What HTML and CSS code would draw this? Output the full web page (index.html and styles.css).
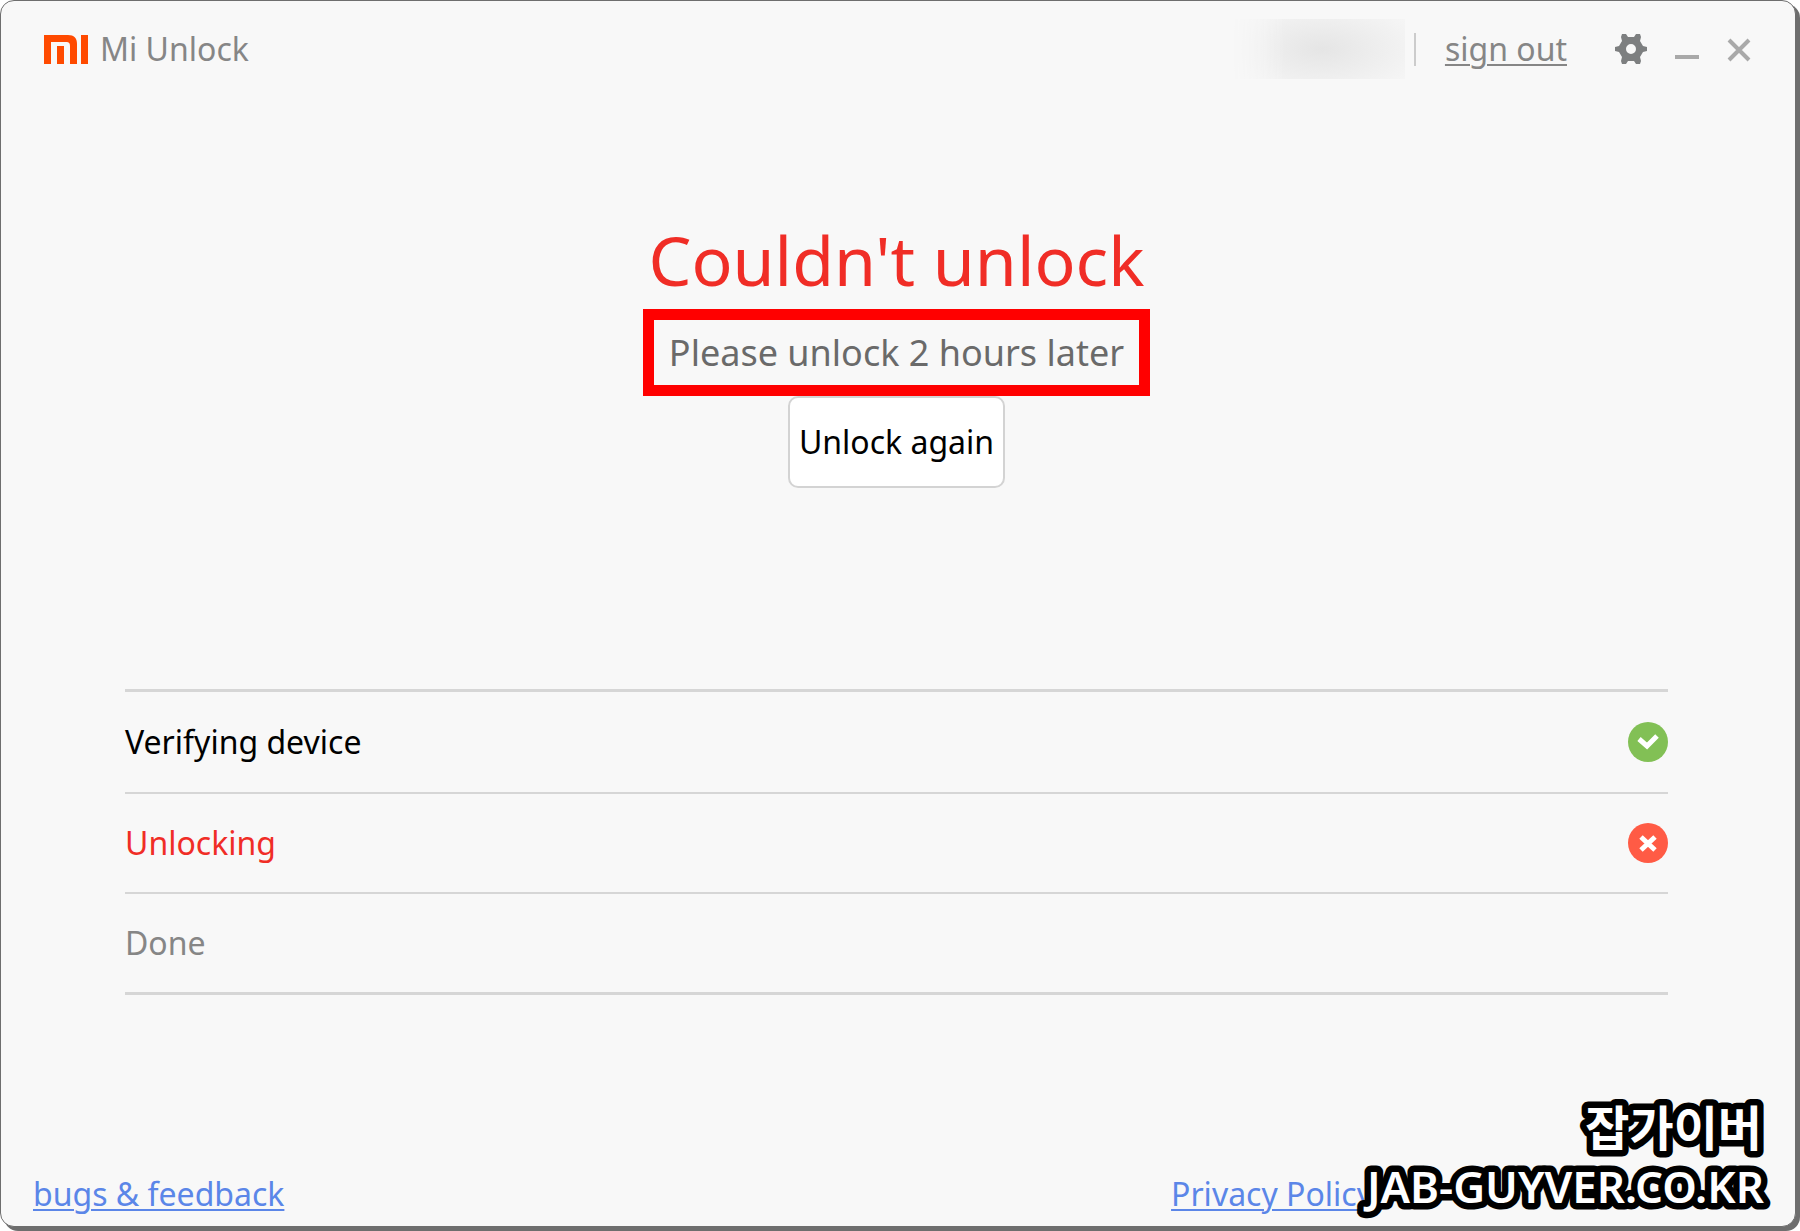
FILE: index.html
```html
<!DOCTYPE html>
<html lang="en">
<head>
  <meta charset="UTF-8">
  <meta name="viewport" content="width=device-width, initial-scale=1">
  <title>Mi Unlock</title>
  <link rel="stylesheet" href="styles.css">
</head>
<body>
  <div class="window">
    <header class="titlebar">
      <div class="brand">
        <svg class="logo" viewBox="0 0 44 29" aria-hidden="true">
          <path d="M0 0h24c6 0 9 3 9 9v20h-7V11c0-3-1-4-4-4H7v22H0z"/>
          <path d="M13 11h7v18h-7zM37 0h7v29h-7z"/>
        </svg>
        <span>Mi Unlock</span>
      </div>
      <div class="account">
        <div class="user"></div>
        <a href="#" class="signout">sign out</a>
      </div>
      <div class="controls">
        <button type="button" aria-label="Settings">
          <svg class="gear" viewBox="0 0 32 30">
            <path fill-rule="evenodd" d="M7 0h4l2 3h6l2-3h4l1 3-1 4 3 5 4 1v4l-4 1-3 5 1 4-1 3h-4l-2-3h-6l-2 3H7l-1-3 1-4-3-5-4-1v-4l4-1 3-5-1-4zM16 10a5 5 0 1 0 0 10a5 5 0 1 0 0-10z"/>
          </svg>
        </button>
        <button type="button" aria-label="Minimize">
          <svg viewBox="0 0 24 30"><path d="M0 23h24"/></svg>
        </button>
        <button type="button" aria-label="Close">
          <svg viewBox="0 0 24 30"><path d="M2 6l20 20M22 6L2 26"/></svg>
        </button>
      </div>
    </header>

    <main>
      <section class="result">
        <h1>Couldn't unlock</h1>
        <p class="notice">Please unlock 2 hours later</p>
        <button type="button" class="again">Unlock again</button>
      </section>

      <ul class="steps">
        <li class="ok">
          <span>Verifying device</span>
          <svg viewBox="0 0 40 40" aria-hidden="true">
            <circle cx="20" cy="20" r="20"/>
            <path d="M11 17l8 7 10-10"/>
          </svg>
        </li>
        <li class="failed">
          <span>Unlocking</span>
          <svg viewBox="0 0 40 40" aria-hidden="true">
            <circle cx="20" cy="20" r="20"/>
            <path d="M13 14l14 13M27 14L13 27"/>
          </svg>
        </li>
        <li class="pending"><span>Done</span></li>
      </ul>
    </main>

    <footer>
      <a href="#">bugs &amp; feedback</a>
      <a href="#">Privacy Policy</a>
    </footer>
  </div>

  <svg class="watermark" viewBox="0 0 400 120" lang="ko">
    <text class="ko" x="398" y="51">잡가이버</text>
    <text x="400" y="108">JAB-GUYVER.CO.KR</text>
  </svg>
</body>
</html>
```

FILE: styles.css
```css
* {
  box-sizing: border-box;
}

body {
  margin: 0;
  min-height: 100vh;
  padding: 0 4px 4px 0;
  display: flex;
  background: #fff;
  font-family: "Noto Sans", "Open Sans", sans-serif;
  font-size: 32px;
  line-height: 44px;
  color: #000;
}

.window {
  flex: 1;
  display: flex;
  flex-direction: column;
  background: #f8f8f8;
  border: 1px solid #6e6e6e;
  border-radius: 14px;
  box-shadow: 4px 4px 0 #6e6e6e;
}

/* title bar */
.titlebar {
  display: flex;
  align-items: center;
  padding: 18px 44px 0 43px;
  color: #868686;
}

.brand {
  display: flex;
  align-items: center;
  gap: 12px;
  margin-right: auto;
}

.logo {
  width: 44px;
  height: 29px;
  fill: #ff4a00;
}

.account {
  display: flex;
  align-items: center;
}

.user {
  width: 173px;
  height: 60px;
  margin-right: 9px;
  background: radial-gradient(110px 52px at 52% 50%, #e5e5e5, #ededed 45%, #f3f3f3 80%, transparent);
  background-color: #f6f6f6;
  -webkit-mask-image: linear-gradient(to right, transparent, #000 30%);
  mask-image: linear-gradient(to right, transparent, #000 30%);
}

.signout {
  color: inherit;
  position: relative;
  padding-left: 31px;
  text-underline-offset: 3px;
  text-decoration-thickness: 2px;
}

.signout::before {
  content: "";
  position: absolute;
  left: 0;
  top: 6px;
  width: 2px;
  height: 33px;
  background: #ccc;
}

.controls {
  display: flex;
  gap: 28px;
  margin-left: 48px;
}

.controls button {
  display: flex;
  padding: 0;
  border: 0;
  background: none;
  cursor: pointer;
}

.controls svg {
  width: 24px;
  height: 30px;
  fill: none;
  stroke: #a9a9a9;
  stroke-width: 4;
}

.controls .gear {
  width: 32px;
  fill: #7d7f80;
  stroke: none;
}

main {
  flex: 1;
  padding: 0 127px 0 124px;
}

.result {
  display: flex;
  flex-direction: column;
  align-items: center;
  padding-top: 136px;
}

h1 {
  margin: 0 0 4px;
  font-size: 68px;
  line-height: 90px;
  font-weight: 400;
  color: #f02d26;
}

.notice {
  margin: 0;
  padding: 10px 15px;
  border: 11px solid #f00;
  font-size: 36px;
  line-height: 45px;
  color: #6a6a6a;
}

.again {
  height: 92px;
  padding: 0 9px;
  border: 2px solid #d3d3d3;
  border-radius: 10px;
  background: #fff;
  color: #000;
  font: inherit;
  cursor: pointer;
}

/* progress list */
.steps {
  list-style: none;
  margin: 201px 0 0;
  padding: 0;
  border-top: 3px solid #d6d6d6;
  border-bottom: 3px solid #d6d6d6;
}

.steps li {
  display: flex;
  align-items: center;
  justify-content: space-between;
  height: 100px;
}

.steps li + li {
  border-top: 2px solid #d6d6d6;
}

.steps svg {
  width: 40px;
  height: 40px;
  fill: none;
  stroke: #fff;
  stroke-width: 5;
}

.ok circle {
  fill: #82c055;
  stroke: none;
}

.failed {
  color: #f02d26;
}

.failed circle {
  fill: #ff5b45;
  stroke: none;
}

.pending {
  color: #868686;
}

footer {
  display: flex;
  justify-content: space-between;
  padding: 0 422px 10px 32px;
}

footer a {
  color: #5b86e8;
  text-underline-offset: 3px;
  text-decoration-thickness: 2px;
}

/* site mark over the lower right corner */
.watermark {
  position: absolute;
  right: 36px;
  bottom: 16px;
  width: 400px;
  height: 120px;
  overflow: visible;
  font-size: 44px;
  font-weight: 600;
  text-anchor: end;
  fill: #fff;
  stroke: #000;
  stroke-width: 13px;
  stroke-linejoin: round;
  paint-order: stroke;
}

.watermark .ko {
  font-family: "Noto Sans CJK KR", sans-serif;
  font-size: 48px;
}
```
